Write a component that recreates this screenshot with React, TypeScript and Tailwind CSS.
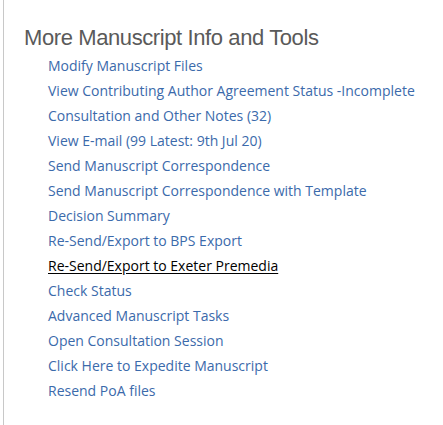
import React from "react";

const links = [
  "Modify Manuscript Files",
  "View Contributing Author Agreement Status -Incomplete",
  "Consultation and Other Notes (32)",
  "View E-mail (99 Latest: 9th Jul 20)",
  "Send Manuscript Correspondence",
  "Send Manuscript Correspondence with Template",
  "Decision Summary",
  "Re-Send/Export to BPS Export",
  "Re-Send/Export to Exeter Premedia",
  "Check Status",
  "Advanced Manuscript Tasks",
  "Open Consultation Session",
  "Click Here to Expedite Manuscript",
  "Resend PoA files",
];

export default function App() {
  return (
    <div className="w-[443px] h-[425px] bg-white overflow-hidden">
      <div className="ml-[3px] h-full border-l border-[#c8c8c8] pl-[20px] pt-[24px]">
        <h2
          className="text-[22px] leading-[28px] tracking-[-0.4px] text-[#5a5a5a] m-0"
          style={{ fontFamily: '"Liberation Sans", Arial, sans-serif' }}
        >
          More Manuscript Info and Tools
        </h2>
        <ul
          className="mt-[1px] pl-[24px] text-[14px] leading-[25px]"
          style={{ fontFamily: '"Open Sans", sans-serif' }}
        >
          {links.map((l, i) => (
            <li key={i}>
              <a
                href="#"
                className={
                  l === "Re-Send/Export to Exeter Premedia"
                    ? "text-black underline underline-offset-2"
                    : "text-[#3b6aab] no-underline"
                }
              >
                {l}
              </a>
            </li>
          ))}
        </ul>
      </div>
    </div>
  );
}
